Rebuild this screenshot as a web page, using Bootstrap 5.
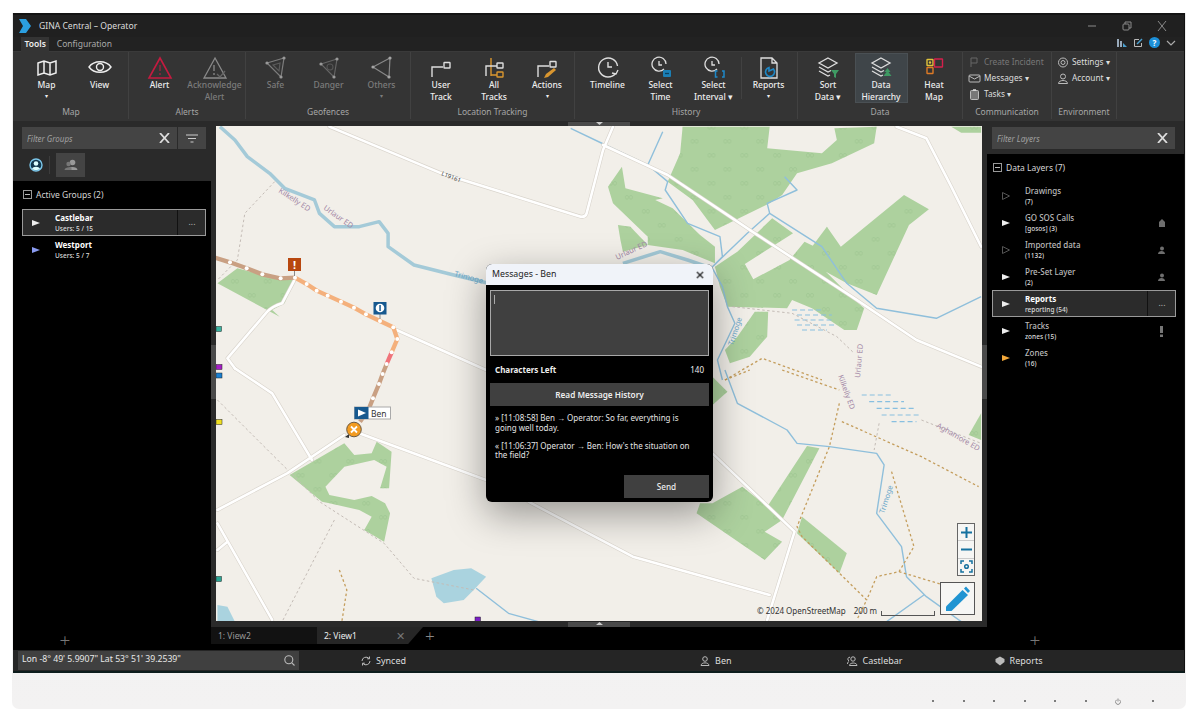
<!DOCTYPE html>
<html lang="en"><head><meta charset="utf-8"><title>GINA Central</title>
<link href="https://cdn.jsdelivr.net/npm/bootstrap@5.3.0/dist/css/bootstrap.min.css" rel="stylesheet">
<style>
html,body{height:718px;overflow:hidden;background:#fff;font-family:"Noto Sans","Open Sans",sans-serif;font-size:8.5px;color:#e8e8e8}
svg{display:block;flex:none}
.bezel{margin:13px 14px 0 12px;height:696px;background:linear-gradient(#ececec,#f3f2f2);border-radius:0 0 7px 7px}
.win{height:660px;margin:0 1px;background:#2a2a2a;border-top:2px solid #141414;border-bottom:2px solid #0c1c1c;border-right:1px solid #111}
.tbar{height:22px;background:#202020;padding:0 16px 0 6px;font-size:8.6px}
.tbar .ttl{margin-left:8px;color:#ddd}
.wctl{gap:23px;color:#8a8a8a}
.tabsrow{height:15px;background:#222;padding:0 8px 0 8px;border-bottom:1px solid #3a3a3a}
.ribtab{padding:0 3.5px;height:15px;line-height:14px;color:#aaa;margin-right:4px}
.ribtab-on{background:#343434;color:#eee;font-weight:600}
.tico{gap:6px}
.ribbon{height:69px;background:#343434;padding-left:1px}
.grp{border-right:1px solid #414141;height:67px}
.g-map{width:115px}.g-alert{width:117px}.g-geo{width:165px}.g-loc{width:164px}.g-hist{width:223px}.g-data{width:165px}.g-comm{width:89px}.g-env{width:65px}
.btnrow{height:53px}
.g-map .btnrow{padding-left:4px}
.g-geo .btnrow{padding-left:1px}
.g-loc .btnrow{padding-left:3px}
.g-data .btnrow{padding-left:2px}
.g-hist .btnrow{padding-left:6px}
.rbtn{width:53px;height:50px;margin-top:1px;padding-top:3px;text-align:center;line-height:12px;color:#eee;font-weight:500}
.g-alert .rbtn{width:55px}
.rbtn svg{margin:0 auto;height:23px}
.rbtn-dim{color:#7c7c7c}
.rbtn-on{background:#3f4549;outline:1px solid #4a5054;outline-offset:-1px}
.rbtn-sep{border-left:1px solid #414141;height:42px;margin:5px 0 0 1px}
.car{font-size:6px;line-height:10px;display:block}
.glabel{height:14px;line-height:14px;text-align:center;color:#a6a6a6}
.comm{height:53px;padding:2px 0 0 5px;line-height:16px}
.crow{height:16px;gap:3px;color:#ddd;white-space:nowrap;font-size:8.3px}
.crow-dim{color:#777}
.mainrow{flex:1 1 0;min-height:0;background:#000}
.side{width:198px;background:#000}
.side-r{width:197px}
.sidehead{background:#2a2a2a;padding:6px 5px 0 9px;height:60px}
.sidehead-r{height:33px;padding:6px 9px 0 5px}
.fbox{height:22px;background:#444;gap:1px}
.filter-in.form-control{background:transparent;border:0;border-radius:0;color:#ddd;font-size:8px;font-style:italic;padding:0 5px;height:22px;box-shadow:none}
.filter-in::placeholder{color:#a0a0a0;opacity:1}
.fx{width:20px;color:#ddd;margin-right:2px}
.fbtn{width:28px;height:22px;background:#444;margin-left:1px}
.tabs2{height:24px;margin-top:4px;gap:6px;padding-left:7px}
.pico{width:29px;height:24px;background:#444}
.psep{width:1px;height:18px;background:#3c3c3c}
.tlist{padding:7px 0 0 9px;flex:1 1 0}
.tlist-r{padding-left:5px}
.thead{height:13px;line-height:13px;color:#d5d5d5;gap:4px;margin-bottom:8px;padding-left:1px}
.minus{width:9px;height:9px;border:1px solid #999;position:relative}
.minus::after{content:"";position:absolute;left:1px;right:1px;top:3px;height:1px;background:#bbb}
.trow{height:27.1px;width:184px}
.trow-sel{background:#2b2b2b;outline:1px solid #9a9a9a;outline-offset:-1px}
.trow .tri{width:33px;padding-left:10px}
.trow .ttl2{line-height:11px;font-size:8px;color:#bbb;font-weight:500;flex:1 1 0}
.trow .ttl2 b{font-weight:700;color:#fff;display:block}
.trow .ttl2 span{display:block}
.trow .subt{font-size:6.5px;color:#ddd}
.trow .dots3{width:29px;height:100%;border-left:1px solid #111;text-align:center;line-height:25px;color:#bbb}
.trow .rgt{width:29px;color:#6e6e6e}
.addbtn{height:20px;line-height:20px;width:86px;text-align:center;font-size:19px;font-weight:300;color:#777;margin-top:auto}
.mid{flex:1 1 0;position:relative;min-width:0}
.stripe{height:5px;background:#2a2a2a;flex:none}
.stripe-b{height:6px}
.hgrip{width:62px;height:5px;background:#4a4a4a;margin:0 auto}
.hgrip svg{margin:1px auto 0}
.mapwrap{height:495px;margin:0 5px;position:relative;background:#f2efe9;overflow:visible}
.midcol{background:#2a2a2a}
.vgrip{position:absolute;top:224px;width:5px;height:54px;background:#4a4a4a}
.vgrip-l{left:0}.vgrip-r{right:0}
.viewtabs{height:17px;background:#000;color:#999}
.vtab{width:106px;height:17px;background:#121212;line-height:17px;padding-left:7px}
.vtab-on{width:106px;background:#262626;color:#eee;clip-path:polygon(0 0,100% 0,86% 100%,0 100%);padding-right:18px}
.vx{color:#777;font-size:11px;line-height:17px}
.vplus{color:#888;font-size:17px;line-height:17px;font-weight:300;margin-left:2px}
.stat{height:21px;background:#252525;color:#ddd;padding-left:5px}
.statin{width:281px;height:19px;background:#404040;padding:0 4px 0 4px;margin-bottom:1px;color:#e8e8e8;font-size:8.7px}
.sitem{gap:5px;white-space:nowrap;font-size:9px}
.s-sync{margin-left:62px}.s-ben{margin-left:294px}.s-cast{margin-left:115px}.s-rep{margin-left:92px}
.dlg.card{position:absolute;left:270px;top:138px;width:227px;height:238px;border:0;border-radius:6px;background:#000;box-shadow:0 12px 38px rgba(0,0,0,.38);overflow:hidden;color:#eee}
.dlg .card-header{height:21px;padding:0 9px 0 6px;background:#f0f3f9;border:0;border-radius:0;color:#222;font-size:8.8px}
.dlg .btn-close{width:8px;height:8px;padding:0;background-size:9px;opacity:1}
.dlg .card-body{padding:5px 4px 4px;font-size:8px;line-height:9.5px}
.dlgwrap{position:relative}
.dlg textarea.form-control{height:66px;background:#404040;border:1px solid #a8a8a8;outline:1px solid #404040;outline-offset:-2px;border-radius:0;resize:none;box-shadow:none}
.caret{position:absolute;left:4px;top:5px;width:1px;height:9px;background:#aaa}
.chars{margin:9px 5px 8px 5px;height:10px;line-height:10px}
.chars b{font-weight:700}
.dbtn.btn{background:#404040;border:0;border-radius:0;color:#eee;font-size:8.2px;font-weight:600;padding:0;height:23px;line-height:23px}
.dlog{padding:7px 5px 0;color:#e4e4e4}
.dlog p{margin:0 0 8.5px}
.dsend.btn{width:85px;font-weight:500;margin-top:auto}
.mapctl{position:absolute;right:7px;top:397px;width:18px;height:53px;background:#f6f6f4;border:1px solid #666}
.mapctl>div{flex:1 1 0;border-bottom:1px solid #ccc}
.mapctl>div:last-child{border:0}
.penbtn{position:absolute;right:7px;top:456px;width:35px;height:33px;background:#f6f6f4;border:1px solid #555}
.attr{position:absolute;left:541px;top:479px;font-size:8px;line-height:12px;color:#333;white-space:nowrap;gap:8px}
.sbar{width:54px;height:5px;border:1px solid #555;border-top:0;margin:4px 0 0 -4px}
#forest polygon,#roads path,.vs{vector-effect:non-scaling-stroke}
.mtxt{font-family:"Noto Sans",sans-serif;font-size:7.5px;fill:#a388a6}
.btmrow{height:36px;padding:20px 32px 0 0;gap:28.5px;color:#555}
.pdot{width:2px;height:2px;background:#555;border-radius:50%}
</style></head>
<body>
<div class="bezel d-flex flex-column">
<div class="win d-flex flex-column flex-none">
  <div class="tbar d-flex align-items-center justify-content-between">
    <div class="d-flex align-items-center">
      <svg width="12" height="14" viewBox="0 0 12 14"><polygon points="0,0 7,0 12,7 7,14 0,14 4,7" fill="#2b9fe0"/></svg>
      <span class="ttl">GINA Central – Operator</span>
    </div>
    <div class="d-flex align-items-center wctl">
      <svg width="12" height="10" viewBox="0 0 12 10"><path d="M2 5h8" stroke="currentColor"/></svg>
      <svg width="12" height="10" viewBox="0 0 12 10" fill="none" stroke="currentColor"><rect x="2" y="3" width="6" height="6" rx="1"/><path d="M4 3V1h6v6H8"/></svg>
      <svg width="12" height="10" viewBox="0 0 12 10"><path d="M2 0l8 10M10 0L2 10" stroke="currentColor"/></svg>
    </div>
  </div>
  <div class="tabsrow d-flex align-items-start justify-content-between">
    <div class="d-flex"><div class="ribtab ribtab-on">Tools</div><div class="ribtab">Configuration</div></div>
    <div class="d-flex align-items-center tico">
      <svg width="10" height="10" viewBox="0 0 10 10"><rect x="0" y="1" width="2" height="8" fill="#9ab"/><rect x="3" y="3" width="2" height="6" fill="#9ab"/><path d="M6 5l4 4H6z" fill="#4aa0d0"/></svg>
      <svg width="10" height="10" viewBox="0 0 10 10" fill="none" stroke="#bbb"><path d="M6 1.500H1.500v7h7V5"/><path d="M4 6l5-5" stroke="#4aa0d0" stroke-width="1.500"/></svg>
      <svg width="11" height="11" viewBox="0 0 11 11"><circle cx="5.500" cy="5.500" r="5.500" fill="#1c8fd8"/><text x="5.500" y="8.500" text-anchor="middle" font-size="8" font-weight="700" fill="#fff" font-family="Noto Sans">?</text></svg>
      <svg width="10" height="8" viewBox="0 0 10 8"><path d="M1 2l4 4 4-4" fill="none" stroke="#aaa" stroke-width="1.200"/></svg>
    </div>
  </div>
  <div class="ribbon d-flex">
    <div class="grp g-map"><div class="btnrow d-flex justify-content-center">
      <div class="rbtn"><svg width="24" viewBox="0 0 24 23" fill="none" stroke="#eee" stroke-width="1.500"><path d="M3 7L9 5l6 2 6-2v12l-6 2-6-2-6 2zM9 5v12M15 7v12"/></svg>Map<span class="car">▾</span></div>
      <div class="rbtn"><svg width="24" viewBox="0 0 24 23" fill="none" stroke="#eee" stroke-width="1.400"><path d="M1 11C6 4 18 4 23 11 18 18 6 18 1 11z"/><circle cx="12" cy="11" r="3.500"/></svg>View</div>
    </div><div class="glabel">Map</div></div>
    <div class="grp g-alert"><div class="btnrow d-flex justify-content-center">
      <div class="rbtn"><svg width="26" viewBox="0 0 26 23" fill="none" stroke="#c41b40" stroke-width="1.600"><path d="M13 2l11 20H2z"/><path d="M13 9v6M13 17v2" stroke-width="1"/></svg>Alert</div>
      <div class="rbtn rbtn-dim"><svg width="26" viewBox="0 0 26 23" fill="none" stroke="#8a8a8a" stroke-width="1.300"><path d="M13 2l11 20H2z"/><path d="M12 9v6M12 17v2"/><path d="M15 18l3 3 5-6" stroke="#666"/></svg>Acknowledge<br>Alert</div>
    </div><div class="glabel">Alerts</div></div>
    <div class="grp g-geo"><div class="btnrow d-flex justify-content-center">
      <div class="rbtn rbtn-dim"><svg width="24" viewBox="0 0 24 23" fill="none" stroke="#7d7d7d" stroke-width="1.200"><path d="M3 7l17-5-3 19z"/><path d="M9 9l7-2-1 8z" stroke="#5c5c5c"/><g fill="#999" stroke="none"><circle cx="3" cy="7" r="1.600"/><circle cx="20" cy="2" r="1.600"/><circle cx="17" cy="21" r="1.600"/></g></svg>Safe</div>
      <div class="rbtn rbtn-dim"><svg width="24" viewBox="0 0 24 23" fill="none" stroke="#666" stroke-width="1.100"><path d="M4 8l16-5-3 18z"/><circle cx="13" cy="11" r="3" stroke="#555"/><g fill="#999" stroke="none"><circle cx="4" cy="8" r="1.600"/><circle cx="20" cy="3" r="1.600"/><circle cx="17" cy="21" r="1.600"/></g></svg>Danger</div>
      <div class="rbtn rbtn-dim"><svg width="24" viewBox="0 0 24 23" fill="none" stroke="#888" stroke-width="1.200"><path d="M3 11l17-9-1 19z"/><g fill="#a5a5a5" stroke="none"><circle cx="3" cy="11" r="1.600"/><circle cx="20" cy="2" r="1.600"/><circle cx="19" cy="21" r="1.600"/></g></svg>Others<span class="car">▾</span></div>
    </div><div class="glabel">Geofences</div></div>
    <div class="grp g-loc"><div class="btnrow d-flex justify-content-center">
      <div class="rbtn"><svg width="24" viewBox="0 0 24 23" fill="none" stroke="#ddd" stroke-width="1.400"><path d="M3 21V11h11"/><rect x="15" y="6.500" width="6" height="5.500" rx=".5"/></svg>User<br>Track</div>
      <div class="rbtn"><svg width="24" viewBox="0 0 24 23" fill="none" stroke="#d9962f" stroke-width="1.400"><path d="M9 2v18M9 9h0M9 19h6"/><path d="M4 20V10h11" stroke="#ddd"/><rect x="15" y="7" width="6" height="5" rx=".5" stroke="#ddd"/><rect x="15" y="16" width="6" height="5" rx=".5"/></svg>All<br>Tracks</div>
      <div class="rbtn"><svg width="24" viewBox="0 0 24 23" fill="none" stroke="#ddd" stroke-width="1.400"><path d="M3 21V10h11"/><rect x="15" y="5.500" width="6" height="5.500" rx=".5"/><path d="M9 22l2-4 8-6 2 2-8 7z" fill="#d9962f" stroke="none"/></svg>Actions<span class="car">▾</span></div>
    </div><div class="glabel">Location Tracking</div></div>
    <div class="grp g-hist"><div class="btnrow d-flex">
      <div class="rbtn"><svg width="24" viewBox="0 0 24 23" fill="none" stroke="#ddd" stroke-width="1.400"><path d="M19.500 17.500A9.500 9.500 0 1 1 21.500 10"/><path d="M12 6v5h4"/><path d="M22 14l-2 4-4-1"/></svg>Timeline</div>
      <div class="rbtn"><svg width="24" viewBox="0 0 24 23" fill="none" stroke="#ddd" stroke-width="1.300"><path d="M15 13A7 7 0 1 1 17 8"/><path d="M10 5v4h3"/><rect x="14" y="14" width="8" height="7" rx="1" fill="#1b7fb5" stroke="none"/><path d="M16 17.500h4" stroke="#0b3f5e"/></svg>Select<br>Time</div>
      <div class="rbtn"><svg width="24" viewBox="0 0 24 23" fill="none" stroke="#ddd" stroke-width="1.300"><path d="M15 13A7 7 0 1 1 17 8"/><path d="M10 5v4h3"/><path d="M15.500 15h-2v6h2M20 15h2v6h-2" stroke="#1e88c7" stroke-width="1.500"/></svg>Select<br>Interval ▾</div>
      <div class="rbtn-sep"></div>
      <div class="rbtn"><svg width="24" viewBox="0 0 24 23" fill="none" stroke="#ddd" stroke-width="1.300"><path d="M4 2h11l5 5v15H4zM15 2v5h5"/><path d="M15.500 12a4.500 4.500 0 1 1-4.500-1.500V14z" stroke="#1e88c7" stroke-width="1.600" transform="translate(1 1)"/></svg>Reports<span class="car">▾</span></div>
    </div><div class="glabel">History</div></div>
    <div class="grp g-data"><div class="btnrow d-flex justify-content-center">
      <div class="rbtn"><svg width="24" viewBox="0 0 24 23" fill="none" stroke="#ddd" stroke-width="1.300"><path d="M12 2l9 5-9 5-9-5zM3 11l9 5 3-1.500M3 15l9 5 2-1"/><path d="M15 14h8l-3 4v4l-2-1v-3z" fill="#3f9a63" stroke="none"/></svg>Sort<br>Data ▾</div>
      <div class="rbtn rbtn-on"><svg width="24" viewBox="0 0 24 23" fill="none" stroke="#ddd" stroke-width="1.300"><path d="M12 2l9 5-9 5-9-5zM3 11l9 5 3-1.500M3 15l9 5 2-1"/><path d="M18.500 12l3 4h-2l3 4h-8l3-4h-2z" fill="#3f9a63" stroke="none"/></svg>Data<br>Hierarchy</div>
      <div class="rbtn"><svg width="24" viewBox="0 0 24 23" fill="none" stroke-width="1.400"><rect x="5" y="3.500" width="6" height="6" rx=".5" stroke="#dfc23a"/><circle cx="8" cy="6.500" r="1.200" fill="#dfc23a"/><rect x="12.500" y="3" width="8" height="8" rx=".5" stroke="#d3204c"/><rect x="5" y="11.500" width="6" height="6" rx=".5" stroke="#dd7a26"/></svg>Heat<br>Map</div>
    </div><div class="glabel">Data</div></div>
    <div class="grp g-comm"><div class="comm">
      <div class="crow crow-dim d-flex align-items-center"><svg width="13" height="11" viewBox="0 0 13 11" fill="none" stroke="#666"><path d="M3 10V1h6v5H3"/></svg>Create Incident</div>
      <div class="crow d-flex align-items-center"><svg width="13" height="11" viewBox="0 0 13 11" fill="none" stroke="#bbb"><rect x="1" y="2" width="11" height="7" rx="1"/><path d="M1 3l5.500 3L12 3"/></svg>Messages ▾</div>
      <div class="crow d-flex align-items-center"><svg width="13" height="11" viewBox="0 0 13 11" fill="none" stroke="#bbb"><rect x="2.500" y="1.500" width="8" height="9" rx="1" fill="#777"/><path d="M5 1h3" stroke="#ddd" stroke-width="1.500"/></svg>Tasks ▾</div>
    </div><div class="glabel">Communication</div></div>
    <div class="grp g-env"><div class="comm">
      <div class="crow d-flex align-items-center"><svg width="12" height="11" viewBox="0 0 12 11" fill="none" stroke="#bbb"><circle cx="6" cy="5.500" r="4.500"/><circle cx="6" cy="5.500" r="2"/></svg>Settings ▾</div>
      <div class="crow d-flex align-items-center"><svg width="12" height="11" viewBox="0 0 12 11" fill="none" stroke="#bbb"><circle cx="6" cy="3.500" r="2.500"/><path d="M1.500 10.500c0-4 9-4 9 0z"/></svg>Account ▾</div>
    </div><div class="glabel">Environment</div></div>
  </div>
  <div class="mainrow d-flex">
    <div class="side d-flex flex-column">
      <div class="sidehead">
        <div class="d-flex">
          <div class="fbox d-flex align-items-center flex-grow-1"><input class="form-control filter-in" placeholder="Filter Groups"><svg class="fx" width="20" height="10" viewBox="0 0 20 10"><path d="M5 0l9 10M14 0L5 10" stroke="#ddd" stroke-width="1.800"/></svg></div>
          <div class="fbtn d-flex align-items-center justify-content-center"><svg width="12" height="9" viewBox="0 0 12 9"><path d="M0 1h12M2 4.500h8M4.500 8h3" stroke="#ccc" stroke-width="1.200"/></svg></div>
        </div>
        <div class="tabs2 d-flex align-items-center">
          <svg width="14" height="14" viewBox="0 0 14 14"><circle cx="7" cy="7" r="6" fill="#12384d" stroke="#7cc7ea" stroke-width="1.400"/><circle cx="7" cy="5.500" r="2.300" fill="#dff"/><path d="M3 11c1-3 7-3 8 0-2 1.500-6 1.500-8 0z" fill="#dff"/></svg>
          <div class="psep"></div>
          <div class="pico d-flex align-items-center justify-content-center"><svg width="14" height="12" viewBox="0 0 14 12" fill="#999"><circle cx="8.500" cy="3.500" r="2.800"/><path d="M3.500 11c0-4 10-4 10 0z"/><circle cx="4.500" cy="5" r="2.200" fill="#777"/><path d="M.5 11c0-3 6-3.500 7-2v2z" fill="#777"/></svg></div>
        </div>
      </div>
      <div class="tlist d-flex flex-column">
        <div class="thead d-flex align-items-center"><span class="minus"></span>Active Groups (2)</div>
        <div class="trow trow-sel d-flex align-items-center">
          <div class="tri"><svg width="8" height="8" viewBox="0 0 8 8"><polygon points="0,1 8,4 0,7" fill="#eee"/></svg></div>
          <div class="ttl2"><b>Castlebar</b><span class="subt">Users: 5 / 15</span></div><div class="dots3">...</div>
        </div>
        <div class="trow d-flex align-items-center">
          <div class="tri"><svg width="8" height="8" viewBox="0 0 8 8"><polygon points="0,1 8,4 0,7" fill="#8a9bf0"/></svg></div>
          <div class="ttl2"><b>Westport</b><span class="subt">Users: 5 / 7</span></div>
        </div>
        <div class="addbtn">+</div>
      </div>
    </div>
    <div class="mid midcol d-flex flex-column">
      <div class="stripe"><div class="hgrip"><svg width="7" height="3" viewBox="0 0 7 3"><path d="M0 0h7L3.500 3z" fill="#ccc"/></svg></div></div>
      <div class="mapwrap">
        <svg width="766" height="495" viewBox="216 126 766 495">
          <defs>
            <pattern id="trees" patternUnits="userSpaceOnUse" width="66" height="84">
              <g fill="none" stroke="#95bd87" stroke-width="1"><ellipse class="vs" cx="14" cy="22" rx="3" ry="6"/><ellipse class="vs" cx="22" cy="22" rx="3" ry="6"/><ellipse class="vs" cx="46" cy="64" rx="3" ry="6"/><ellipse class="vs" cx="54" cy="64" rx="3" ry="6"/></g>
            </pattern>
            <g id="forest">
              <g transform="translate(210 120) scale(.4975 .3333)">
                <polygon points="950,20 1125,20 1120,85 1230,100 1260,60 1255,25 1340,20 1335,70 1250,130 1180,160 1150,225 1125,250 1015,330 970,240 920,185 945,100"/>
                <polygon points="828,140 800,200 810,250 880,350 880,375 950,390 1015,430 1015,380 985,345 930,265 895,240 910,235 835,205"/>
                <polygon points="820,315 845,320 880,375 830,395 825,360"/>
                <polygon points="1130,295 1172,340 1075,432 1092,478 1165,420 1195,365 1218,382 1165,422 1210,380 1240,320 1268,380 1395,225 1445,268 1405,315 1340,525 1280,490 1238,455 1285,525 1315,565 1300,630 1275,630 1210,565 1170,540 1160,565 1040,560 1025,500 1015,440 1060,395"/>
                <polygon points="1095,575 1122,575 1120,650 1085,710 1045,730 1035,690 1060,650"/>
                <polygon points="1490,20 1550,20 1550,38 1510,38"/>
                <polygon points="15,490 55,445 105,465 170,480 150,550 125,570 140,590"/>
              </g>
              <g transform="translate(210 370) scale(.4975 .3333)">
                <polygon points="270,220 290,255 325,250 335,215 365,245 360,355 342,355 355,290 330,270 270,290 232,350 240,375 290,390 325,378 352,400 362,430 350,515 310,480 325,440 300,420 240,400 225,395 160,315"/>
                <polygon points="1010,20 1040,65 1010,105"/>
                <polygon points="1200,228 1225,235 1150,450 1115,485 1150,515 1115,570 978,430 985,400 1010,400 1070,350 1120,410"/>
                <polygon points="1190,440 1280,550 1265,610 1180,490"/>
                <polygon points="1550,130 1550,210 1525,195"/>
              </g>
            </g>
            <g id="roads" fill="none" stroke-linecap="round" stroke-linejoin="round">
              <g transform="translate(210 120) scale(.4975 .3333)">
                <path d="M240 20L465 160 745 290Q755 292 757 280L790 90 810 20"/>
                <path d="M790 75L920 165 1090 335 1290 530 1420 660 1550 740"/>
                <path d="M1380 20L1440 55 1490 200 1550 380"/>
                <path d="M375 630L555 750"/>
                <path d="M170 480L145 550Q125 560 115 575L35 715 50 745"/>
              </g>
              <g transform="translate(210 370) scale(.4975 .3333)">
                <path d="M50 -5L125 70 205 270"/>
                <path d="M270 195L155 310 15 420"/>
                <path d="M15 460L125 750M35 515L15 540"/>
                <path d="M300 190L555 330M640 395L850 560 1125 675"/>
                <path d="M1010 250L1175 485 1120 750"/>
              </g>
            </g>
          </defs>
          <use href="#forest" fill="#add19e"/>
          <use href="#forest" fill="url(#trees)"/>
          <g fill="#aad3df" transform="translate(210 370) scale(.4975 .3333)">
            <polygon points="445,625 490,600 525,595 555,620 530,660 510,690 470,700 455,680"/>
            <polygon points="15,705 35,710 50,755 15,755"/>
          </g>
          <g fill="none" stroke-linejoin="round">
            <g transform="translate(210 120) scale(.4975 .3333)">
              <path class="vs" stroke="#a4cad8" stroke-width="3.500" d="M20 20L50 60 75 110 120 160 150 205 210 240 220 280 250 320 300 320 340 305 358 340 358 380 410 435 490 465 560 490M830 430L905 395 960 420 1010 445"/>
              <path class="vs" stroke="#8fbfdb" stroke-width="1.400" d="M1010 445L1030 500 1040 560 1055 610 1020 720 1030 780M725 25L795 75 880 135 910 35M880 135L920 185 915 210 960 310 1025 350 1030 410 1010 440 1080 340 1125 280 1120 250 1180 210 1155 170M1125 280L1230 380 1280 490 1340 565 1460 595 1550 530"/>
              <g stroke="#88bfe0" stroke-width="1.200" stroke-dasharray="5 3"><path class="vs" d="M1170 570h60M1180 585h70M1175 600h80M1180 615h80M1190 630h50"/></g>
              <g stroke="#c49d5c" stroke-width="1.300" stroke-dasharray="2.500 2.500"><path class="vs" d="M1035 780L1110 715 1230 780"/></g>
              <g stroke="#c4bcb6" stroke-width="1" stroke-dasharray="2.500 2.500"><path class="vs" d="M130 185L70 280 55 420 15 480M1050 560L1170 580 1260 650 1295 700"/></g>
            </g>
            <g transform="translate(210 370) scale(.4975 .3333)">
              <path class="vs" stroke="#8fbfdb" stroke-width="1.400" d="M1035 0L1060 100 1160 180 1180 220 1245 230 1340 250 1355 285 1340 430 1390 530 1400 620 1440 680 1510 755M1435 675L1360 755M535 655L600 730 660 755"/>
              <g stroke="#88bfe0" stroke-width="1.200" stroke-dasharray="5 3"><path class="vs" d="M1310 75h60M1325 95h70M1340 115h80M1350 135h75M1370 155h50"/></g>
              <g stroke="#c49d5c" stroke-width="1.300" stroke-dasharray="2.500 2.500"><path class="vs" d="M1035 30L1085 0M1150 0L1265 60M1265 100L1245 230 1180 470 1190 500 1320 690 1300 750M1270 155L1430 260 1545 350M1370 305L1415 530 1385 605 1340 620 1320 690M1385 605L1530 670M260 600L275 660 265 755"/></g>
              <g stroke="#c4bcb6" stroke-width="1" stroke-dasharray="2.500 2.500"><path class="vs" d="M15 90L220 395 350 520 410 625 530 660M250 450L145 755M1345 160L1335 240M1430 150L1550 220"/></g>
            </g>
          </g>
          <use href="#roads" stroke="#d9d4cc" stroke-width="3.800"/>
          <use href="#roads" stroke="#fff" stroke-width="2.600"/>
          <text class="mtxt" transform="translate(278 192) rotate(33)">Kilkelly ED</text>
          <text class="mtxt" transform="translate(323 209) rotate(35)">Urlaur ED</text>
          <text class="mtxt" style="fill:#444;font-size:6px" transform="translate(441 175) rotate(22)">L19161</text>
          <text class="mtxt" style="fill:#6aa7c9" transform="translate(454 276) rotate(15)">Trimoge</text>
          <text class="mtxt" transform="translate(617 260) rotate(-25)">Urlaur ED</text>
          <text class="mtxt" style="fill:#6aa7c9" transform="translate(733 346) rotate(-72)">Trimoge</text>
          <text class="mtxt" transform="translate(860 378) rotate(-85)">Urlaur ED</text>
          <text class="mtxt" transform="translate(838 376) rotate(70)">Kilkelly ED</text>
          <text class="mtxt" transform="translate(936 427) rotate(30)">Aghamore ED</text>
          <text class="mtxt" style="fill:#6aa7c9" transform="translate(884 514) rotate(-72)">Trimoge</text>
          <g transform="translate(210 240) scale(.3333)" fill="none" stroke-width="4.300">
            <path class="vs" stroke="#c9a083" d="M5 50L60 67 110 85 157 103 210 115 255 113"/>
            <path class="vs" stroke="#f4b07c" d="M255 113L290 132 320 152 353 167 393 185 432 203 468 223 510 243 550 262 562 297 545 337"/>
            <path class="vs" stroke="#f0737a" d="M545 337L530 372"/>
            <path class="vs" stroke="#c9a083" d="M530 372L518 402 507 432 489 475 475 510 450 545"/>
            <g fill="#fff" stroke="none">
              <circle cx="60" cy="67" r="6"/><circle cx="110" cy="85" r="6"/><circle cx="157" cy="103" r="6"/><circle cx="212" cy="115" r="6"/><circle cx="255" cy="113" r="6"/><circle cx="290" cy="132" r="6"/><circle cx="320" cy="152" r="6"/><circle cx="353" cy="167" r="6"/><circle cx="393" cy="185" r="6"/><circle cx="432" cy="203" r="6"/><circle cx="468" cy="223" r="6"/><circle cx="510" cy="243" r="6"/><circle cx="550" cy="262" r="6"/><circle cx="562" cy="297" r="6"/><circle cx="545" cy="337" r="6"/><circle cx="530" cy="372" r="6"/><circle cx="518" cy="402" r="6"/><circle cx="507" cy="432" r="6"/><circle cx="489" cy="475" r="6"/>
            </g>
          </g>
          <path d="M294.500 271v5" stroke="#888"/>
          <rect x="288" y="258" width="13" height="13" fill="#b8470f"/>
          <text x="294.500" y="269" text-anchor="middle" font-size="11" font-weight="700" fill="#fff" font-family="Noto Sans">!</text>
          <path d="M380 314v5" stroke="#888"/>
          <rect x="373.500" y="302" width="13" height="12.500" fill="#17598f"/>
          <circle cx="380" cy="308" r="4.300" fill="#fff"/>
          <rect x="379.300" y="305" width="1.500" height="6" fill="#17598f"/>
          <rect x="354.500" y="407" width="36" height="12" fill="#fff" stroke="#aaa"/>
          <rect x="354.500" y="407" width="14" height="12" fill="#17598f"/>
          <polygon points="358,409.500 366,413 358,416.500" fill="#fff"/>
          <text x="371" y="416.500" font-size="8.500" fill="#333" font-family="Noto Sans">Ben</text>
          <path d="M345 437l4-3v4z" fill="#333"/>
          <circle cx="354" cy="429.500" r="7.300" fill="#f29b21" stroke="#6b5a44" stroke-width="1"/>
          <path d="M351 426.500l6 6M357 426.500l-6 6" stroke="#fff" stroke-width="1.800"/>
          <g stroke="#222" stroke-width=".5">
            <rect x="216" y="326.500" width="5.500" height="5" fill="#39b3a0"/>
            <rect x="216" y="364.500" width="6" height="5" fill="#a51ec4"/>
            <rect x="216" y="373" width="6" height="5" fill="#1a7fd0"/>
            <rect x="216" y="419.500" width="6" height="5" fill="#f0df20"/>
            <rect x="216" y="576.500" width="5.500" height="5" fill="#2aa594"/>
            <rect x="475" y="617" width="5.500" height="5" fill="#7a1ec4"/>
          </g>
        </svg>
        <div class="attr d-flex align-items-center"><span>© 2024 OpenStreetMap</span><span>200 m</span><span class="sbar"></span></div>
        <div class="mapctl d-flex flex-column">
          <div class="d-flex align-items-center justify-content-center"><svg width="13" height="13" viewBox="0 0 13 13"><path d="M6.500 1v11M1 6.500h11" stroke="#15719f" stroke-width="2"/></svg></div>
          <div class="d-flex align-items-center justify-content-center"><svg width="13" height="13" viewBox="0 0 13 13"><path d="M1 6.500h11" stroke="#15719f" stroke-width="2"/></svg></div>
          <div class="d-flex align-items-center justify-content-center"><svg width="13" height="13" viewBox="0 0 13 13" fill="none" stroke="#15719f" stroke-width="1.500"><path d="M1 4V1h3M9 1h3v3M12 9v3H9M4 12H1V9"/><circle cx="6.500" cy="6.500" r="1.800"/></svg></div>
        </div>
        <div class="penbtn d-flex align-items-center justify-content-center"><svg width="27" height="27" viewBox="0 0 27 27"><path d="M2 21.500L18.500 5 24 10 7.500 26 2 26z" fill="#1f94d2"/><path d="M20 3.500l2-2 4 4.500-2 2z" fill="#1f94d2"/></svg></div>
        <div class="dlg card">
          <div class="card-header d-flex align-items-center justify-content-between">Messages - Ben<button type="button" class="btn-close" aria-label="Close"></button></div>
          <div class="card-body d-flex flex-column">
            <div class="dlgwrap"><textarea class="form-control" aria-label="Message"></textarea><span class="caret"></span></div>
            <div class="chars d-flex justify-content-between"><b>Characters Left</b><span>140</span></div>
            <button type="button" class="btn dbtn w-100">Read Message History</button>
            <div class="dlog"><p>» [11:08:58] Ben → Operator: So far, everything is<br>going well today.</p><p>« [11:06:37] Operator → Ben: How's the situation on<br>the field?</p></div>
            <button type="button" class="btn dbtn dsend ms-auto">Send</button>
          </div>
        </div>
      </div>
      <div class="stripe stripe-b"><div class="hgrip"><svg width="7" height="3" viewBox="0 0 7 3"><path d="M0 3h7L3.500 0z" fill="#ccc"/></svg></div></div>
      <div class="viewtabs d-flex align-items-center">
        <div class="vtab">1: View2</div>
        <div class="vtab vtab-on d-flex justify-content-between"><span>2: View1</span><span class="vx">✕</span></div>
        <div class="vplus">+</div>
      </div>
      <div class="flex-grow-1 bg-black"></div>
      <div class="vgrip vgrip-l"></div><div class="vgrip vgrip-r"></div>
    </div>
    <div class="side side-r d-flex flex-column">
      <div class="sidehead sidehead-r">
        <div class="fbox d-flex align-items-center"><input class="form-control filter-in" placeholder="Filter Layers"><svg class="fx" width="20" height="10" viewBox="0 0 20 10"><path d="M5 0l9 10M14 0L5 10" stroke="#ddd" stroke-width="1.800"/></svg></div>
      </div>
      <div class="tlist tlist-r d-flex flex-column">
        <div class="thead d-flex align-items-center"><span class="minus"></span>Data Layers (7)</div>
        <div class="trow d-flex align-items-center"><div class="tri"><svg width="8" height="8" viewBox="0 0 8 8"><polygon points=".5,.5 7.500,4 .5,7.500" fill="none" stroke="#555"/></svg></div><div class="ttl2">Drawings<span class="subt">(7)</span></div></div>
        <div class="trow d-flex align-items-center"><div class="tri"><svg width="8" height="8" viewBox="0 0 8 8"><polygon points="0,1 8,4 0,7" fill="#eee"/></svg></div><div class="ttl2">GO SOS Calls<span class="subt">[gosos] (3)</span></div><div class="rgt d-flex justify-content-center"><svg width="8" height="8" viewBox="0 0 8 8" fill="#6e6e6e"><path d="M4 0l3 3v5H1V3z"/></svg></div></div>
        <div class="trow d-flex align-items-center"><div class="tri"><svg width="8" height="8" viewBox="0 0 8 8"><polygon points=".5,.5 7.500,4 .5,7.500" fill="none" stroke="#555"/></svg></div><div class="ttl2">Imported data<span class="subt">(1132)</span></div><div class="rgt d-flex justify-content-center"><svg width="9" height="8" viewBox="0 0 9 8" fill="#6e6e6e"><circle cx="5" cy="2.500" r="2"/><path d="M1 8c0-4 7-4 7 0z"/></svg></div></div>
        <div class="trow d-flex align-items-center"><div class="tri"><svg width="8" height="8" viewBox="0 0 8 8"><polygon points="0,1 8,4 0,7" fill="#eee"/></svg></div><div class="ttl2">Pre-Set Layer<span class="subt">(2)</span></div><div class="rgt d-flex justify-content-center"><svg width="9" height="8" viewBox="0 0 9 8" fill="#6e6e6e"><circle cx="5" cy="2.500" r="2"/><path d="M1 8c0-4 7-4 7 0z"/></svg></div></div>
        <div class="trow trow-sel d-flex align-items-center"><div class="tri"><svg width="8" height="8" viewBox="0 0 8 8"><polygon points="0,1 8,4 0,7" fill="#eee"/></svg></div><div class="ttl2"><b>Reports</b><span class="subt">reporting (54)</span></div><div class="dots3">...</div></div>
        <div class="trow d-flex align-items-center"><div class="tri"><svg width="8" height="8" viewBox="0 0 8 8"><polygon points="0,1 8,4 0,7" fill="#eee"/></svg></div><div class="ttl2">Tracks<span class="subt">zones (15)</span></div><div class="rgt d-flex justify-content-center"><svg width="5" height="11" viewBox="0 0 5 11" fill="#777"><rect x="1" y="0" width="3" height="7"/><rect x="1" y="8.500" width="3" height="2.500"/></svg></div></div>
        <div class="trow d-flex align-items-center"><div class="tri"><svg width="8" height="8" viewBox="0 0 8 8"><polygon points="0,1 8,4 0,7" fill="#f2a83a"/></svg></div><div class="ttl2">Zones<span class="subt">(16)</span></div></div>
        <div class="addbtn">+</div>
      </div>
    </div>
  </div>
  <div class="stat d-flex align-items-center">
    <div class="statin d-flex align-items-center justify-content-between"><span>Lon -8° 49' 5.9907" Lat 53° 51' 39.2539"</span><svg width="11" height="11" viewBox="0 0 11 11" fill="none" stroke="#bbb" stroke-width="1.100"><circle cx="4.800" cy="4.800" r="4"/><path d="M7.800 7.800L10.500 10.500"/></svg></div>
    <div class="sitem s-sync d-flex align-items-center"><svg width="10" height="10" viewBox="0 0 10 10" fill="none" stroke="#bbb"><path d="M1 5a4 4 0 0 1 7-2.500M9 5a4 4 0 0 1-7 2.500"/><path d="M8.500 .5v2.300H6.200M1.500 9.500V7.200h2.300"/></svg>Synced</div>
    <div class="sitem s-ben d-flex align-items-center"><svg width="10" height="10" viewBox="0 0 10 10" fill="none" stroke="#bbb"><circle cx="5" cy="3" r="2.300"/><path d="M1 9.500c0-3.500 8-3.500 8 0z"/></svg>Ben</div>
    <div class="sitem s-cast d-flex align-items-center"><svg width="11" height="10" viewBox="0 0 11 10" fill="none" stroke="#bbb"><circle cx="6" cy="3" r="2.200"/><path d="M2.500 9.500c0-3.300 7.500-3.300 7.500 0z"/><path d="M3 1.200A2 2 0 0 0 2 5M.5 8c0-1.500.5-2 1.500-2.500"/></svg>Castlebar</div>
    <div class="sitem s-rep d-flex align-items-center"><svg width="10" height="10" viewBox="0 0 10 10"><path d="M5 .5l4.500 2.500v3L5 9.500.5 6V3z" fill="#bbb"/></svg>Reports</div>
  </div>
</div>
<div class="btmrow d-flex justify-content-end align-items-center">
  <span class="pdot"></span><span class="pdot"></span><span class="pdot"></span><span class="pdot"></span><span class="pdot"></span><span class="pdot"></span>
  <svg width="6" height="7" viewBox="0 0 6 7" fill="none" stroke="#666" stroke-width=".7"><path d="M1.600 1.800a2.500 2.500 0 1 0 2.800 0M3 .5v3"/></svg>
  <span class="pdot ms-1"></span>
</div>
</div>
<script src="https://cdn.jsdelivr.net/npm/bootstrap@5.3.0/dist/js/bootstrap.bundle.min.js"></script>
</body></html>
